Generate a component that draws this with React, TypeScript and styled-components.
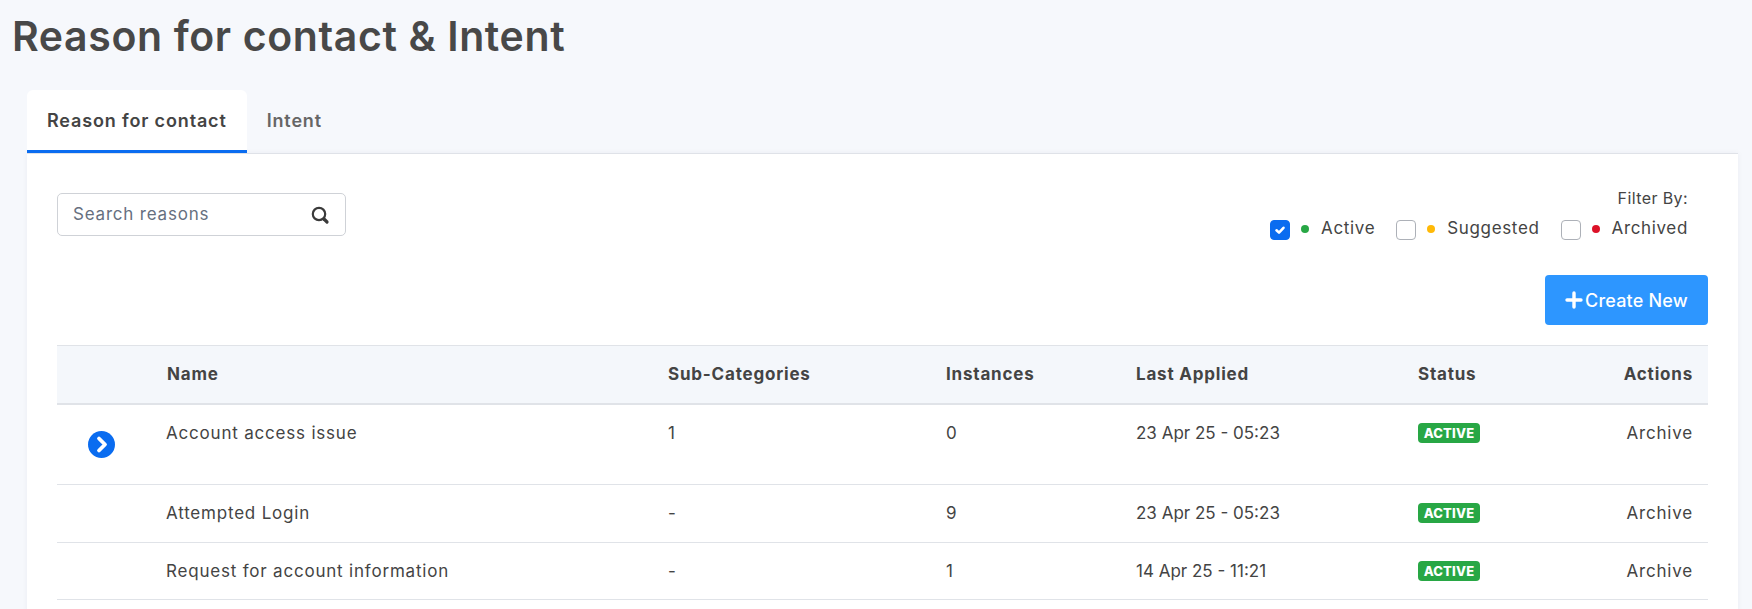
import React from "react";
import styled, { createGlobalStyle } from "styled-components";

const Global = createGlobalStyle`
  html, body { margin: 0; padding: 0; height: 100%; overflow: hidden; background: #f6f8fc; }
  body { font-family: Inter, "Noto Sans", sans-serif; color: #444; }
  * { box-sizing: border-box; }
`;

const Page = styled.div`
  height: 609px;
  overflow: hidden;
  padding: 8px 14px 0 12px;
`;

const Title = styled.h1`
  margin: 0;
  height: 82px;
  font-size: 41px;
  line-height: 56px;
  font-weight: 600;
  letter-spacing: 0.62px;
  color: #484848;
`;

const Tabs = styled.div`
  display: flex;
  margin-left: 15px;
`;

const Tab = styled.div<{ $active?: boolean }>`
  height: 63px;
  padding: 0 20px;
  display: flex;
  align-items: center;
  font-size: 18px;
  letter-spacing: 0.85px;
  font-weight: 600;
  border-radius: 6px 6px 0 0;
  background: ${(p) => (p.$active ? "#fff" : "transparent")};
  color: ${(p) => (p.$active ? "#444" : "#666")};
  border-bottom: 3px solid ${(p) => (p.$active ? "#0a6cf0" : "transparent")};
`;

const Panel = styled.section`
  margin-left: 15px;
  background: #fff;
  border-top: 1px solid #dfe2e8;
  box-shadow: 0 0 6px rgba(30, 40, 80, 0.05);
  padding: 30px 30px 0 30px;
  height: 460px;
`;

const TopRow = styled.div`
  display: flex;
  justify-content: space-between;
  align-items: flex-start;
`;

const SearchBox = styled.label`
  margin-top: 9px;
  width: 289px;
  height: 43px;
  border: 1px solid #cfd2d7;
  border-radius: 5px;
  display: flex;
  align-items: center;
  justify-content: space-between;
  padding: 0 15px 2px 15px;
  font-size: 17px;
  letter-spacing: 0.8px;
  color: #66707f;

  svg {
    margin-top: 2px;
  }
`;

const FilterColumn = styled.div`
  display: flex;
  flex-direction: column;
  align-items: flex-end;
  margin-right: 20px;
  margin-top: 2px;
`;

const FilterLabel = styled.div`
  font-size: 16px;
  letter-spacing: 0.4px;
  line-height: 24px;
  margin-bottom: 6px;
`;

const FilterRow = styled.div`
  display: flex;
  align-items: center;
`;

const Filter = styled.div`
  display: flex;
  align-items: center;
  margin-left: 21px;
  font-size: 17px;
  letter-spacing: 0.65px;
  line-height: 24px;
`;

const Box = styled.span<{ $on?: boolean }>`
  width: 20px;
  height: 20px;
  border-radius: 4px;
  margin-top: 4px;
  display: flex;
  align-items: center;
  justify-content: center;
  border: 1px solid ${(p) => (p.$on ? "#0a6cf0" : "#adb1b8")};
  background: ${(p) => (p.$on ? "#0a6cf0" : "#fff")};
`;

const Dot = styled.span<{ $color: string }>`
  width: 8px;
  height: 8px;
  border-radius: 50%;
  margin: 2px 12px 0 11px;
  background: ${(p) => p.$color};
`;

const ButtonRow = styled.div`
  display: flex;
  justify-content: flex-end;
  margin-top: 35px;
`;

const CreateButton = styled.button`
  width: 163px;
  height: 50px;
  border: 0;
  border-radius: 4px;
  background: #2d96ff;
  color: #fff;
  font: 500 18px Inter, sans-serif;
  letter-spacing: 0.2px;
  display: flex;
  align-items: center;
  justify-content: center;
  gap: 2px;
`;

const Table = styled.table`
  margin-top: 20px;
  width: 1651px;
  table-layout: fixed;
  border-collapse: collapse;
`;

const HeadRow = styled.tr`
  background: #f4f7fb;
  height: 58px;
  border-top: 1px solid #e0e3e8;
  border-bottom: 2px solid #e0e3e8;
`;

const Th = styled.th<{ $right?: boolean }>`
  padding: 0 ${(p) => (p.$right ? "15px" : "16px")} 0 16px;
  font-size: 17px;
  letter-spacing: 0.8px;
  font-weight: 700;
  color: #444;
  text-align: ${(p) => (p.$right ? "right" : "left")};
`;

const Row = styled.tr<{ $h: number }>`
  height: ${(p) => p.$h}px;
  border-bottom: 1px solid #e0e3e8;
`;

const Td = styled.td<{ $right?: boolean }>`
  padding: 16px ${(p) => (p.$right ? "15px" : "16px")} 15px 16px;
  font-size: 17px;
  letter-spacing: 0.8px;
  line-height: 24px;
  vertical-align: top;
  color: #444;
  text-align: ${(p) => (p.$right ? "right" : "left")};
`;

const NameCell = styled(Td)`
  padding-left: 15px;
`;

const DateCell = styled(Td)`
  letter-spacing: 0;
`;

const ExpandCell = styled.td`
  padding: 26px 0 0 31px;
  vertical-align: top;
`;

const Badge = styled.span`
  display: inline-flex;
  align-items: center;
  justify-content: center;
  width: 62px;
  height: 20px;
  margin-top: 2px;
  border-radius: 4px;
  background: #28a745;
  color: #fff;
  font-size: 13px;
  letter-spacing: 0.2px;
  font-weight: 800;
  vertical-align: top;
`;

const rows = [
  { name: "Account access issue", sub: "1", n: "0", date: "23 Apr 25 - 05:23", h: 81, open: true },
  { name: "Attempted Login", sub: "-", n: "9", date: "23 Apr 25 - 05:23", h: 58 },
  { name: "Request for account information", sub: "-", n: "1", date: "14 Apr 25 - 11:21", h: 57 },
];

const filters = [
  { label: "Active", color: "#28a745", on: true },
  { label: "Suggested", color: "#ffb907" },
  { label: "Archived", color: "#dc1128" },
];

export default function App() {
  return (
    <Page>
      <Global />
      <Title>Reason for contact &amp; Intent</Title>
      <Tabs>
        <Tab $active>Reason for contact</Tab>
        <Tab>Intent</Tab>
      </Tabs>
      <Panel>
        <TopRow>
          <SearchBox>
            Search reasons
            <svg width="20" height="20" viewBox="0 0 20 20" fill="none" stroke="#3a3a3a">
              <circle cx="9" cy="9" r="6.2" strokeWidth="2.2" />
              <path d="M14 14 17 17" strokeWidth="3.2" strokeLinecap="round" />
            </svg>
          </SearchBox>
          <FilterColumn>
            <FilterLabel>Filter By:</FilterLabel>
            <FilterRow>
              {filters.map((f) => (
                <Filter key={f.label}>
                  <Box $on={f.on}>
                    {f.on && (
                      <svg width="12" height="12" viewBox="0 0 12 12" fill="none" stroke="#fff" strokeWidth="2.6" strokeLinecap="round" strokeLinejoin="round">
                        <path d="M2.5 6.3 5 8.6 9.5 3.8" />
                      </svg>
                    )}
                  </Box>
                  <Dot $color={f.color} />
                  {f.label}
                </Filter>
              ))}
            </FilterRow>
          </FilterColumn>
        </TopRow>
        <ButtonRow>
          <CreateButton>
            <svg width="18" height="18" viewBox="0 0 18 18" stroke="#fff" strokeWidth="3.4" strokeLinecap="round">
              <path d="M9 2v14M2 9h14" />
            </svg>
            Create New
          </CreateButton>
        </ButtonRow>
        <Table>
          <colgroup>
            <col width="94" />
            <col width="501" />
            <col width="278" />
            <col width="190" />
            <col width="282" />
            <col width="130" />
            <col width="176" />
          </colgroup>
          <thead>
            <HeadRow>
              <Th />
              <Th>Name</Th>
              <Th>Sub-Categories</Th>
              <Th>Instances</Th>
              <Th>Last Applied</Th>
              <Th>Status</Th>
              <Th $right>Actions</Th>
            </HeadRow>
          </thead>
          <tbody>
            {rows.map((r) => (
              <Row key={r.name} $h={r.h}>
                <ExpandCell>
                  {r.open && (
                    <svg width="27" height="27" viewBox="0 0 27 27" style={{ display: "block" }}>
                      <circle cx="13.5" cy="13.5" r="13.5" fill="#0a6cf0" />
                      <path d="M11 7.5l6 6-6 6" fill="none" stroke="#fff" strokeWidth="3.8" strokeLinecap="round" strokeLinejoin="round" />
                    </svg>
                  )}
                </ExpandCell>
                <NameCell>{r.name}</NameCell>
                <Td>{r.sub}</Td>
                <Td>{r.n}</Td>
                <DateCell>{r.date}</DateCell>
                <Td><Badge>ACTIVE</Badge></Td>
                <Td $right>Archive</Td>
              </Row>
            ))}
          </tbody>
        </Table>
      </Panel>
    </Page>
  );
}
